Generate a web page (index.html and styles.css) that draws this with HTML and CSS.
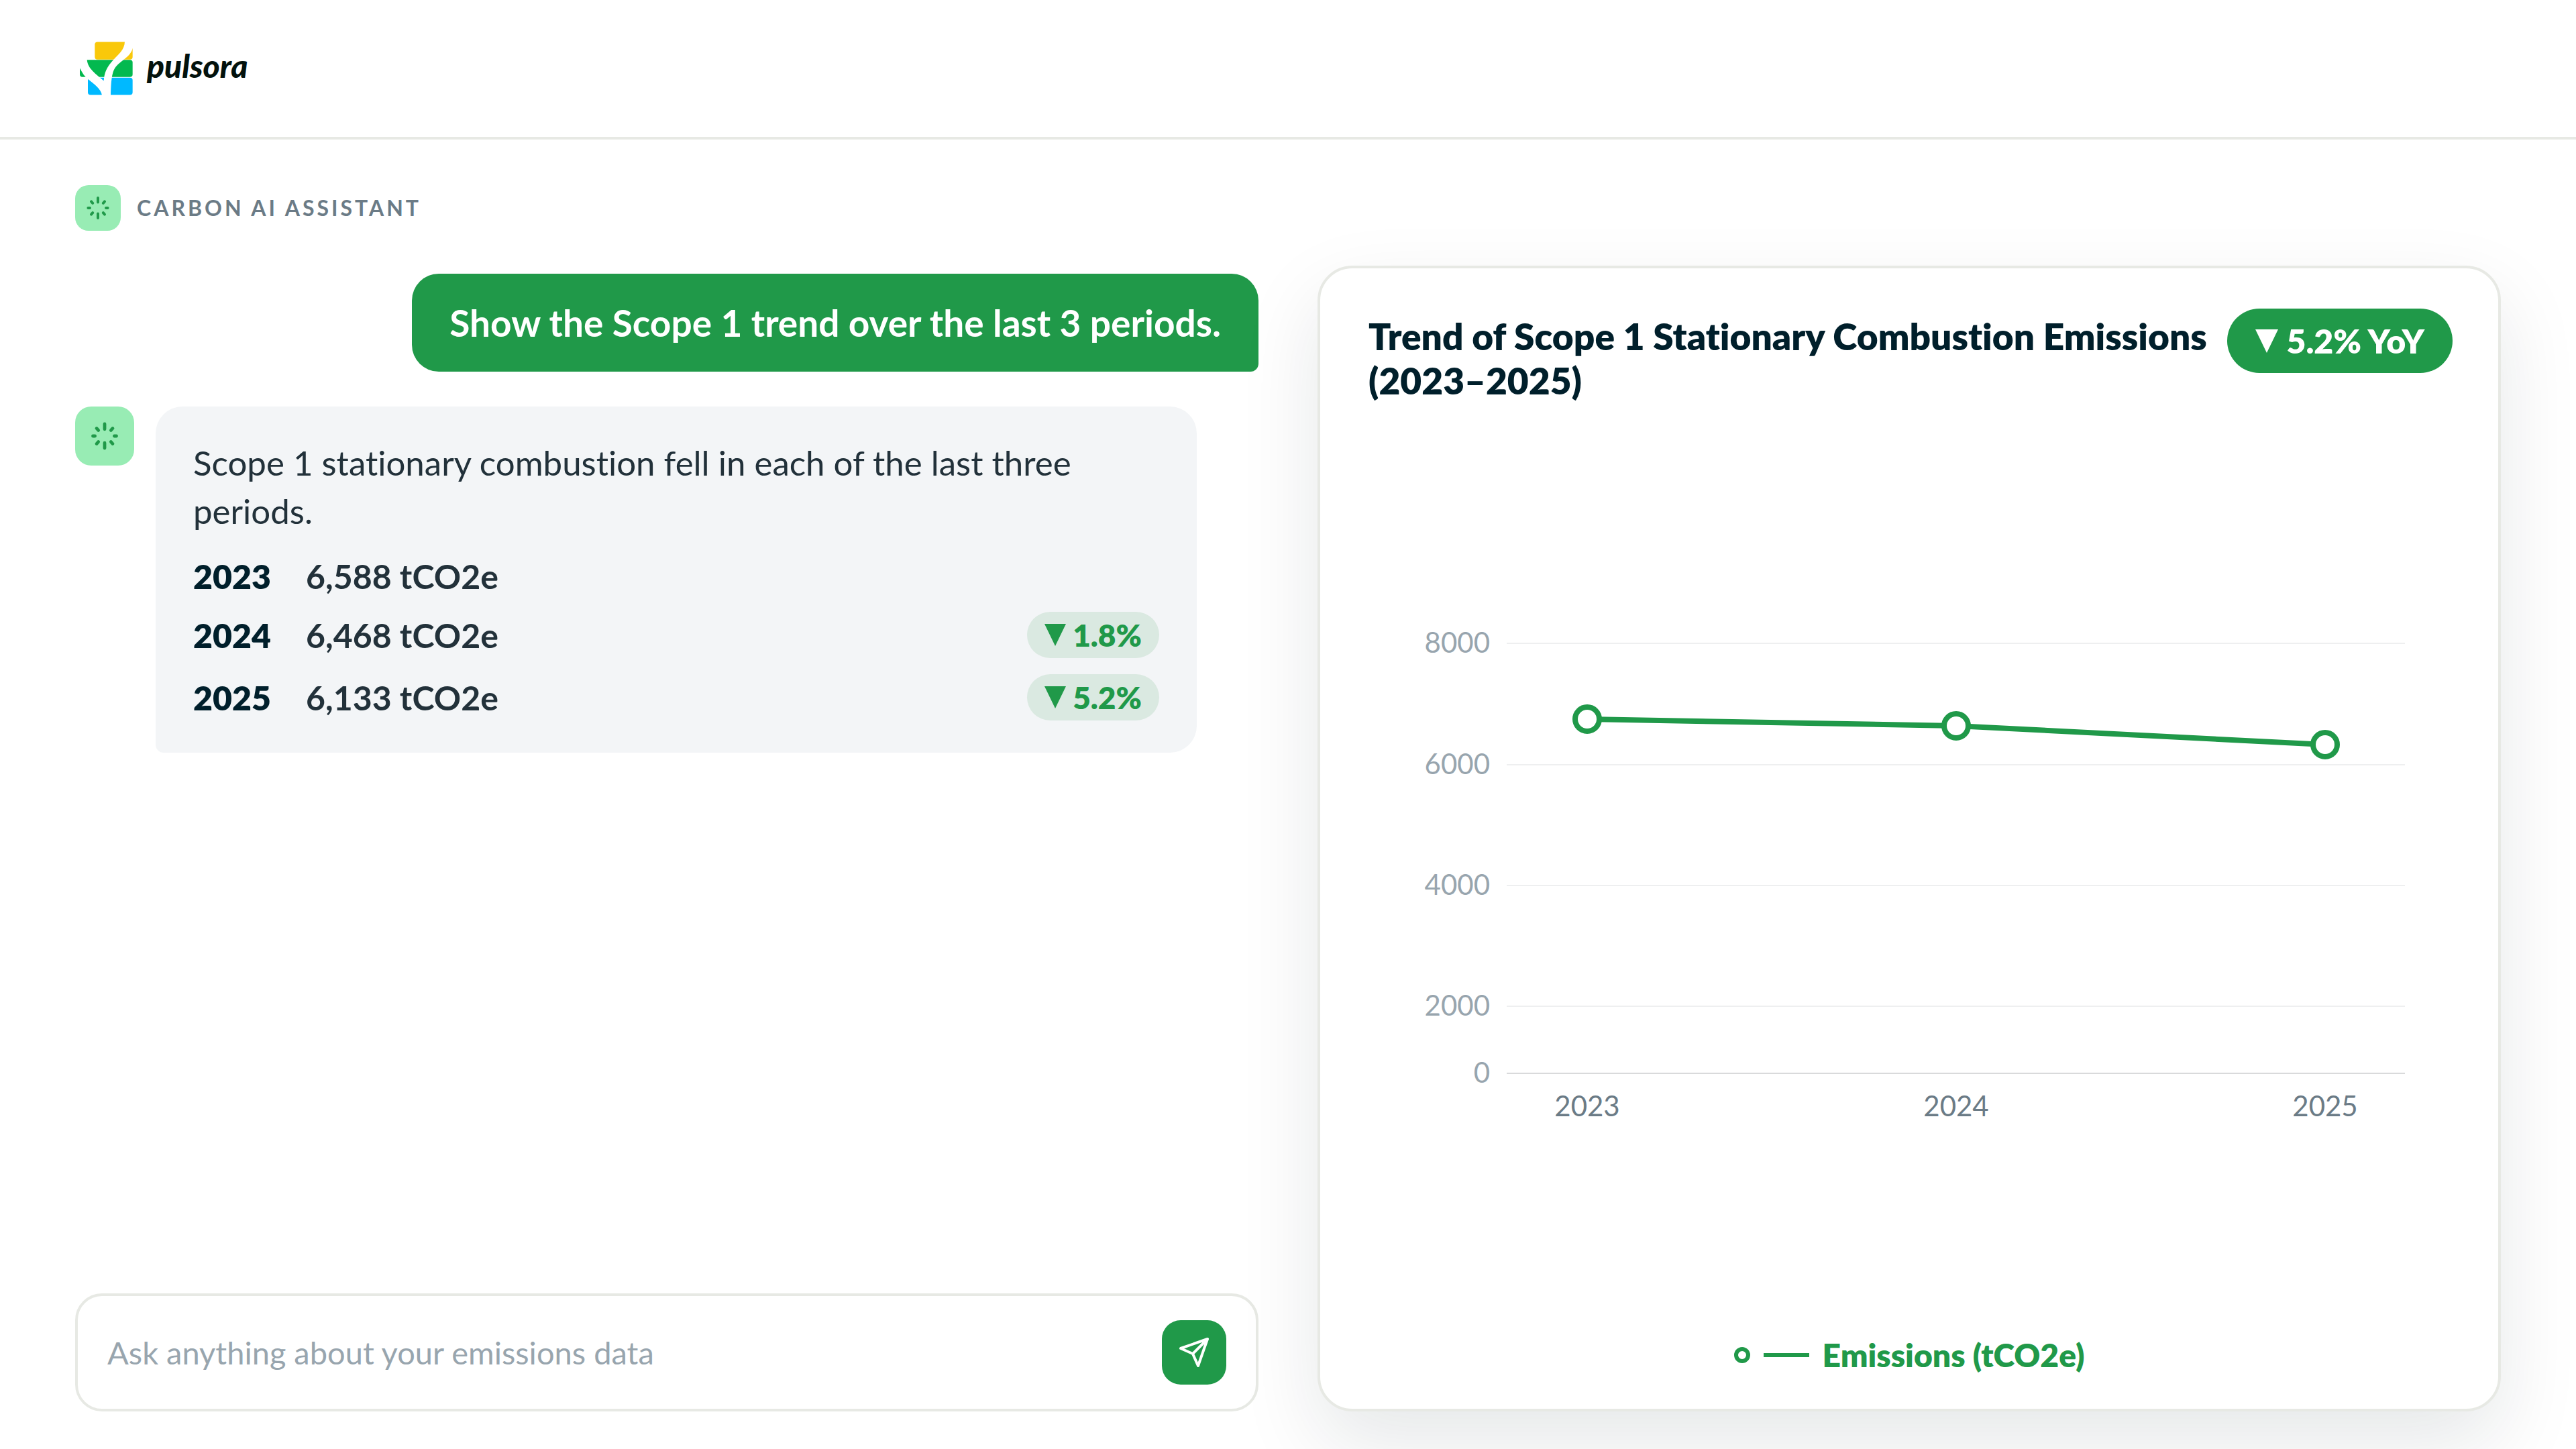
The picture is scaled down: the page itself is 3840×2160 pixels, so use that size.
FILE: index.html
```html
<!DOCTYPE html>
<html lang="en">
<head>
  <meta charset="utf-8">
  <meta name="viewport" content="width=device-width, initial-scale=1.0">
  <title>Pulsora - Carbon AI Assistant</title>
  <link rel="stylesheet" href="styles.css">
</head>
<body>
  <svg class="sprite" aria-hidden="true">
    <symbol id="spark" viewBox="0 0 40 40">
      <path d="M20 5v6.5M20 28.5V35M5.4 20h2.6M32 20h2.6M10 10.4l2.2 2.4M30 10.4l-2.2 2.4M10 29.6l2.2-2.4M30 29.6l-2.2-2.4"/>
    </symbol>
    <symbol id="down" viewBox="0 0 32 33">
      <path d="M0 0h32L16 33z"/>
    </symbol>
  </svg>

  <header class="topbar">
    <a class="brand" href="#">
      <svg class="brand-mark" viewBox="88 66 237 239" aria-hidden="true">
        <rect x="155" y="67" width="169" height="79" rx="12" fill="#f9c80a"/>
        <rect x="88" y="147" width="236" height="77" rx="12" fill="#03b94f"/>
        <rect x="124" y="227" width="200" height="77" rx="12" fill="#00b9ff"/>
        <path fill="#fff" d="M86 145h34C122 186 160 210 195 241C197 205 208 180 238 147C262 121 288 103 289 65H326V90C316 140 262 150 240 193C228 220 227 270 226 306H187C184 278 150 254 124 233C108 221 98 204 86 180z"/>
      </svg>
      <span class="brand-name">pulsora</span>
    </a>
  </header>

  <main class="page">
    <div class="eyebrow">
      <span class="avatar avatar-sm"><svg><use href="#spark"/></svg></span>
      <h1>CARBON AI ASSISTANT</h1>
    </div>

    <div class="columns">
      <section class="chat">
        <p class="bubble bubble-user">Show the Scope 1 trend over the last 3 periods.</p>

        <div class="reply">
          <span class="avatar"><svg><use href="#spark"/></svg></span>
          <div class="bubble bubble-ai">
            <p>Scope 1 stationary combustion fell in each of the last three periods.</p>
            <table class="periods">
              <tr>
                <th scope="row">2023</th>
                <td>6,588 tCO2e</td>
                <td></td>
              </tr>
              <tr>
                <th scope="row">2024</th>
                <td>6,468 tCO2e</td>
                <td><span class="pill"><svg><use href="#down"/></svg>1.8%</span></td>
              </tr>
              <tr>
                <th scope="row">2025</th>
                <td>6,133 tCO2e</td>
                <td><span class="pill"><svg><use href="#down"/></svg>5.2%</span></td>
              </tr>
            </table>
          </div>
        </div>

        <form class="composer">
          <input type="text" aria-label="Question" placeholder="Ask anything about your emissions data">
          <button type="submit" aria-label="Send">
            <svg viewBox="0 0 24 24"><path d="M22 2L11 13M22 2l-7 20-4-9-9-4z"/></svg>
          </button>
        </form>
      </section>

      <section class="card">
        <div class="card-head">
          <h2>Trend of Scope 1 Stationary Combustion Emissions (2023–2025)</h2>
          <span class="badge"><svg><use href="#down"/></svg>5.2% YoY</span>
        </div>

        <div class="chart">
          <svg viewBox="0 0 1620 768" role="img" aria-label="Emissions by year">
            <g class="grid">
              <path d="M210 47h1339M210 228h1339M210 408h1339M210 588h1339"/>
              <path class="axis" d="M210 688h1339"/>
            </g>
            <g class="ticks-y">
              <text x="185" y="61">8000</text>
              <text x="185" y="242">6000</text>
              <text x="185" y="422">4000</text>
              <text x="185" y="602">2000</text>
              <text x="185" y="702">0</text>
            </g>
            <g class="ticks-x">
              <text x="330" y="752">2023</text>
              <text x="880" y="752">2024</text>
              <text x="1430" y="752">2025</text>
            </g>
            <g class="series">
              <polyline points="330,160 880,170 1430,198"/>
              <circle cx="330" cy="160" r="18"/>
              <circle cx="880" cy="170" r="18"/>
              <circle cx="1430" cy="198" r="18"/>
            </g>
          </svg>
        </div>

        <div class="legend">
          <span class="legend-dot"></span>
          <span class="legend-line"></span>
          Emissions (tCO2e)
        </div>
      </section>
    </div>
  </main>
</body>
</html>
```
FILE: styles.css
```css
:root {
  --green: #209949;
  --mint: #98ecb4;
  --ink: #001f2b;
  --text: #22313a;
  --muted: #6b7b86;
  --faint: #98a5ae;
  --line: #e7e9e4;
}
* {
  box-sizing: border-box;
}
body {
  margin: 0;
  min-height: 100vh;
  display: flex;
  flex-direction: column;
  background-color: #fff;
  color: var(--text);
  font-family: "Lato", sans-serif;
  font-size: 51px;
  font-variant-ligatures: none;
  line-height: 72px;
}
h1, h2, p {
  margin: 0;
}
.sprite {
  display: none;
}

/* top bar */
.topbar {
  display: flex;
  align-items: center;
  height: 208px;
  padding: 0 119px;
  border-bottom: 4px solid var(--line);
}
.brand {
  display: flex;
  align-items: center;
  gap: 21px;
  color: #03120d;
  text-decoration: none;
}
.brand-mark {
  width: 79px;
  height: 80px;
}
.brand-name {
  padding-bottom: 8px;
  font-size: 48px;
  font-weight: 900;
  font-style: italic;
  line-height: 64px;
}

/* layout */
.page {
  flex: 1;
  display: flex;
  flex-direction: column;
  gap: 52px;
  padding: 68px 112px 56px;
}
.eyebrow {
  display: flex;
  align-items: center;
  gap: 24px;
}
.eyebrow h1 {
  font-size: 32px;
  font-weight: 700;
  line-height: 40px;
  letter-spacing: 4px;
  color: var(--muted);
}
.columns {
  flex: 1;
  display: grid;
  grid-template-columns: 1fr 1fr;
  gap: 88px;
}
.avatar {
  flex: none;
  display: flex;
  align-items: center;
  justify-content: center;
  width: 88px;
  height: 88px;
  border-radius: 24px;
  background-color: var(--mint);
}
.avatar svg {
  width: 48px;
  height: 48px;
  fill: none;
  stroke: var(--green);
  stroke-width: 4;
  stroke-linecap: round;
}
.avatar-sm {
  width: 68px;
  height: 68px;
  border-radius: 20px;
}
.avatar-sm svg {
  width: 40px;
  height: 40px;
}

/* chat */
.chat {
  display: flex;
  flex-direction: column;
  gap: 52px;
  padding-top: 12px;
}
.bubble {
  border-radius: 40px;
}
.bubble-user {
  align-self: flex-end;
  padding: 32px 56px;
  border-bottom-right-radius: 12px;
  background-color: var(--green);
  color: #fff;
  font-size: 55px;
  font-weight: 700;
  line-height: 82px;
}
.reply {
  display: flex;
  align-items: flex-start;
  gap: 32px;
  padding-right: 92px;
}
.bubble-ai {
  flex: 1;
  padding: 48px 56px;
  border-bottom-left-radius: 12px;
  background-color: #f3f5f7;
}
.periods {
  width: 100%;
  margin-top: 8px;
  border-collapse: collapse;
  font-size: 50px;
  font-weight: 700;
  line-height: 58px;
}
.periods th,
.periods td {
  padding: 24px 0 0;
  text-align: left;
}
.periods th {
  width: 168px;
  font-weight: 800;
  color: var(--ink);
}
.pill {
  display: flex;
  align-items: center;
  gap: 10px;
  width: fit-content;
  margin-left: auto;
  padding: 8px 26px;
  border-radius: 40px;
  background-color: #dae9e1;
  color: var(--green);
  font-size: 46px;
  font-weight: 800;
  line-height: 53px;
}
.pill svg {
  width: 32px;
  height: 33px;
  fill: currentColor;
}
.composer {
  display: flex;
  align-items: center;
  gap: 32px;
  margin-top: auto;
  padding: 36px 44px;
  border: 4px solid var(--line);
  border-radius: 40px;
}
.composer input {
  flex: 1;
  min-width: 0;
  padding: 0;
  border: none;
  outline: none;
  background: none;
  color: var(--text);
  font-family: inherit;
  font-size: 47px;
  line-height: 72px;
}
.composer input::placeholder {
  color: var(--faint);
  opacity: 1;
}
.composer button {
  display: flex;
  align-items: center;
  justify-content: center;
  width: 96px;
  height: 96px;
  padding: 0;
  border: none;
  border-radius: 28px;
  background-color: var(--green);
  cursor: pointer;
}
.composer button svg {
  width: 48px;
  height: 48px;
  fill: none;
  stroke: #fff;
  stroke-width: 2;
  stroke-linecap: round;
  stroke-linejoin: round;
}

/* chart card */
.card {
  display: flex;
  flex-direction: column;
  padding: 60px 68px 52px;
  border: 4px solid var(--line);
  border-radius: 52px;
  background-color: #fff;
  box-shadow: 0 48px 120px rgba(0, 31, 43, 0.1);
}
.card-head {
  display: flex;
  align-items: flex-start;
  justify-content: space-between;
  gap: 12px;
}
.card-head h2 {
  padding: 8px 0 0 4px;
  font-size: 55px;
  font-weight: 800;
  line-height: 66px;
  color: var(--ink);
}
.badge {
  flex: none;
  display: flex;
  align-items: center;
  gap: 12px;
  padding: 20px 42px;
  border-radius: 48px;
  background-color: var(--green);
  color: #fff;
  font-size: 50px;
  font-weight: 800;
  line-height: 56px;
}
.badge svg {
  width: 34px;
  height: 35px;
  fill: currentColor;
}
.chart {
  flex: 1;
  display: flex;
  align-items: center;
}
.chart svg {
  width: 100%;
}
.chart text {
  font-size: 42px;
}
.grid path {
  stroke: #eeeff0;
  stroke-width: 2;
}
.grid .axis {
  stroke: #d9dadb;
}
.ticks-y text {
  fill: var(--faint);
  text-anchor: end;
}
.ticks-x text {
  fill: var(--muted);
  text-anchor: middle;
}
.series {
  fill: none;
  stroke: var(--green);
  stroke-width: 8;
}
.series circle {
  fill: #fff;
}
.legend {
  display: flex;
  align-items: center;
  justify-content: center;
  gap: 20px;
  color: var(--green);
  font-size: 48px;
  font-weight: 800;
  line-height: 56px;
}
.legend-dot {
  width: 24px;
  height: 24px;
  border: 6px solid var(--green);
  border-radius: 50%;
}
.legend-line {
  width: 68px;
  height: 6px;
  background-color: var(--green);
}
```
